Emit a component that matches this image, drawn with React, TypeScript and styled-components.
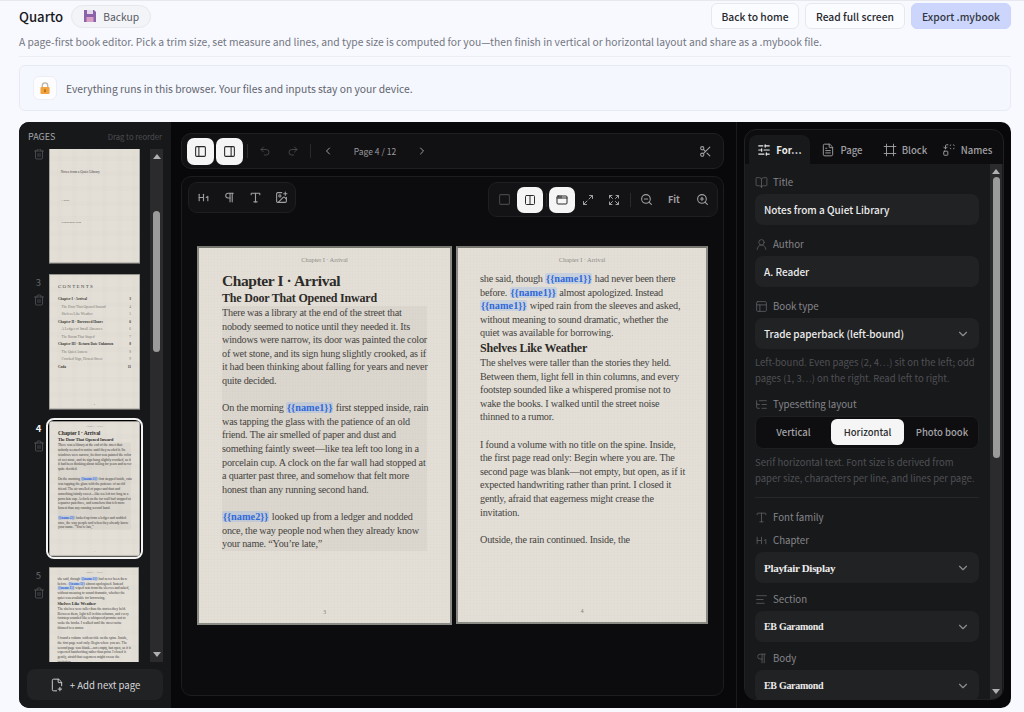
import { ReactNode } from 'react';
import styled, { createGlobalStyle } from 'styled-components';
import {
  AlignLeft,
  AppWindow,
  BookOpen,
  ChevronDown,
  ChevronLeft,
  ChevronRight,
  Columns2,
  Expand,
  FilePlus2,
  FileText,
  Frame,
  Heading1,
  ImagePlus,
  ListTree,
  Maximize2,
  PanelLeft,
  PanelRight,
  PanelsTopLeft,
  Pilcrow,
  Redo2,
  Replace,
  Scissors,
  SlidersHorizontal,
  Square,
  Trash2,
  Type,
  Undo2,
  UserRound,
  ZoomIn,
  ZoomOut,
} from 'lucide-react';

const GlobalStyle = createGlobalStyle`
  html, body {
    margin: 0;
    height: 712px;
    overflow: hidden;
    background: #f8f9ff;
    font-family: "Noto Sans CJK JP", "Noto Sans", sans-serif;
  }
  * { box-sizing: border-box; }
`;

const Shell = styled.div`
  width: 1024px;
  height: 712px;
  padding: 2px 13px 0 19px;
  border-top: 1px solid #e6e8ee;
  overflow: hidden;
`;

const HeaderRow = styled.header`
  display: flex;
  align-items: center;
  height: 26px;
`;

const BrandTitle = styled.h1`
  margin: 0 8px 0 0;
  font-size: 13.2px;
  font-weight: 500;
  color: #17181c;
`;

const BackupPill = styled.div`
  display: flex;
  align-items: center;
  gap: 7px;
  height: 23px;
  padding: 0 11px 0 12px;
  border: 1px solid #e6e8ee;
  border-radius: 12px;
  background: #f3f4f8;
  font-size: 10.3px;
  color: #55585f;
`;

const HeaderActions = styled.div`
  display: flex;
  gap: 6px;
  margin-left: auto;
`;

const HeaderButton = styled.button<{ $primary?: boolean; $w: number }>`
  width: ${(p) => p.$w}px;
  height: 26px;
  padding: 0;
  border: 1px solid ${(p) => (p.$primary ? '#c9d3fb' : '#e6e8ee')};
  border-radius: 6px;
  background: ${(p) => (p.$primary ? '#ccd6fc' : '#fbfcff')};
  font-family: inherit;
  font-size: 10.3px;
  font-weight: 500;
  color: ${(p) => (p.$primary ? '#33363f' : '#26282d')};
`;

const Tagline = styled.p`
  margin: 5px 0 0;
  height: 23px;
  padding-bottom: 7px;
  border-bottom: 1px solid #eceef3;
  font-size: 10.3px;
  line-height: 16px;
  color: #74777f;
`;

const Notice = styled.div`
  display: flex;
  align-items: center;
  gap: 9px;
  height: 46px;
  margin-top: 8px;
  padding-left: 13px;
  border: 1px solid #e8ebf5;
  border-radius: 6px;
  background: #f5f7ff;
  font-size: 10.3px;
  color: #62656d;
`;

const LockBox = styled.div`
  display: flex;
  align-items: center;
  justify-content: center;
  width: 24px;
  height: 24px;
  border: 1px solid #eceef5;
  border-radius: 6px;
  background: #fdfdff;
`;

const Editor = styled.section`
  display: grid;
  grid-template-columns: 152px 566px 274px;
  height: 586px;
  margin-top: 11px;
  border-radius: 10px;
  background: #08080a;
  overflow: hidden;
`;

const PagesPanel = styled.aside`
  display: flex;
  flex-direction: column;
  height: 586px;
  padding: 8px 8px 8px 9px;
  background: #17181a;
`;

const PagesHead = styled.div`
  display: flex;
  align-items: center;
  justify-content: space-between;
  height: 13px;
  padding-right: 1px;
  font-size: 9px;
  color: #a3a4a8;
`;

const DragHint = styled.span`
  font-size: 7.7px;
  color: #4d4e52;
`;

const PagesBody = styled.div`
  display: flex;
  gap: 6px;
  height: 513px;
  margin-top: 6px;
`;

const ThumbList = styled.div`
  flex: 1;
  min-width: 0;
  overflow: hidden;
`;

const ThumbRows = styled.div`
  display: flex;
  flex-direction: column;
  gap: 10px;
  margin-top: -21px;
`;

const ThumbRow = styled.div`
  display: flex;
`;

const ThumbSide = styled.div<{ $active?: boolean }>`
  display: flex;
  flex-direction: column;
  align-items: center;
  gap: 5px;
  flex: none;
  width: 21px;
  padding-top: 2px;
  font-size: 9.5px;
  line-height: 13px;
  font-weight: ${(p) => (p.$active ? 700 : 400)};
  color: ${(p) => (p.$active ? '#f2f2f2' : '#66676b')};
  svg { color: #56575b; }
`;

const ThumbFrame = styled.div<{ $active?: boolean }>`
  flex: none;
  overflow: hidden;
  ${(p) =>
    p.$active
      ? `width: 97px;
         height: 141px;
         margin: -2px 0 -2px -3px;
         padding: 1px;
         border: 2px solid #f4f4f4;
         border-radius: 8px;
         background: #000;`
      : `width: 91px;
         height: 136px;`}
`;

const ThumbScale = styled.div`
  width: 255px;
  height: 381px;
  transform: scale(0.357);
  transform-origin: top left;
`;

const Scrollbar = styled.div<{ $width: number }>`
  display: flex;
  flex-direction: column;
  flex: none;
  width: ${(p) => p.$width}px;
  background: #2b2b2d;
`;

const ScrollArrow = styled.div<{ $down?: boolean }>`
  flex: none;
  width: 0;
  height: 0;
  margin: 5px auto 0;
  border-left: 4px solid transparent;
  border-right: 4px solid transparent;
  ${(p) => (p.$down ? 'border-top: 5px solid #b0b0b0; margin: auto auto 5px;' : 'border-bottom: 5px solid #b0b0b0;')}
`;

const ScrollThumb = styled.div<{ $top: number; $height: number }>`
  flex: none;
  width: 7px;
  height: ${(p) => p.$height}px;
  margin: ${(p) => p.$top}px auto 0;
  border-radius: 4px;
  background: #9b9b9b;
`;

const AddPage = styled.button`
  display: flex;
  align-items: center;
  justify-content: center;
  gap: 6px;
  height: 31px;
  margin: 7px 0 0 -1px;
  width: 136px;
  border: 0;
  border-radius: 8px;
  background: #212224;
  font-family: inherit;
  font-size: 9.6px;
  color: #d6d6d8;
`;

const Center = styled.main`
  display: flex;
  flex-direction: column;
  gap: 7px;
  padding: 11px 12px 12px 10px;
  border-right: 1px solid #1b1b1e;
`;

const TopBar = styled.div`
  display: flex;
  align-items: center;
  gap: 2px;
  height: 36px;
  padding: 0 5px;
  border: 1px solid #202023;
  border-radius: 10px;
  background: #111113;
`;

const ToolButton = styled.div<{ $on?: boolean; $dim?: boolean; $w?: number }>`
  display: flex;
  align-items: center;
  justify-content: center;
  flex: none;
  width: ${(p) => p.$w ?? 26}px;
  height: ${(p) => (p.$w === 27 ? '27px' : '26px')};
  border-radius: 7px;
  font-size: 9px;
  font-weight: 600;
  background: ${(p) => (p.$on ? '#f5f5f5' : 'transparent')};
  color: ${(p) => (p.$on ? '#2a2a2c' : p.$dim ? '#46464a' : '#a0a0a4')};
`;

const ToolSep = styled.div`
  flex: none;
  width: 1px;
  height: 14px;
  margin: 0 2px;
  background: #2a2a2d;
`;

const PageLabel = styled.span`
  flex: none;
  width: 64px;
  text-align: center;
  font-size: 8.5px;
  color: #9a9a9e;
`;

const Push = styled.div`
  margin-left: auto;
`;

const Canvas = styled.div`
  flex: 1;
  padding: 5px 5px 0 6px;
  border: 1px solid #1d1d20;
  border-radius: 10px;
  background: #0c0c0e;
`;

const CanvasTools = styled.div`
  display: flex;
  align-items: flex-start;
  justify-content: space-between;
`;

const ToolGroup = styled.div<{ $tall?: boolean }>`
  display: flex;
  align-items: center;
  height: ${(p) => (p.$tall ? '35px' : '31px')};
  padding: 0 ${(p) => (p.$tall ? '2px' : '1px')};
  border: 1px solid #1f1f22;
  border-radius: 9px;
  background: #131315;
  ${ToolSep} { margin: 0 2.5px; }
`;

const Spread = styled.div`
  display: flex;
  align-items: flex-start;
  gap: 4px;
  margin: 29px 0 0 9px;
`;

const Sheet = styled.article<{ $narrow?: boolean }>`
  display: flex;
  flex-direction: column;
  width: ${(p) => (p.$narrow ? '252px' : '255px')};
  height: ${(p) => (p.$narrow ? '378px' : '379px')};
  padding: 0 ${(p) => (p.$narrow ? '22px' : '23px')};
  border: 2px solid #8b8b86;
  border-top-color: #77776f;
  background-color: #e3dfd7;
  background-image:
    repeating-linear-gradient(0deg, rgba(0, 0, 0, 0.008) 0 1px, transparent 1px 3px),
    repeating-linear-gradient(90deg, rgba(0, 0, 0, 0.008) 0 1px, transparent 1px 3px);
  font-family: "Liberation Serif", serif;
  color: #45433e;
`;

const RunningHead = styled.div`
  flex: none;
  height: 24px;
  padding-top: 8px;
  text-align: center;
  font-size: 6.5px;
  line-height: 8px;
  letter-spacing: -0.1px;
  color: #8f8d87;
`;

const SheetBody = styled.div`
  flex: 1;
`;

const ChapterHead = styled.h2`
  margin: 0;
  font-size: 15.5px;
  line-height: 18px;
  letter-spacing: -0.4px;
  font-weight: 700;
  color: #2d2b28;
  white-space: nowrap;
`;

const SectionHead = styled.h3`
  margin: 0;
  font-size: 12px;
  line-height: 16px;
  letter-spacing: -0.2px;
  font-weight: 700;
  color: #2d2b28;
  white-space: nowrap;
`;

const Shade = styled.div`
  background: rgba(90, 80, 60, 0.055);
`;

const Line = styled.div`
  height: 13.6px;
  font-size: 10.2px;
  line-height: 13.6px;
  letter-spacing: -0.2px;
  white-space: nowrap;
`;

const Token = styled.span`
  padding: 0 1px;
  border-radius: 2px;
  background: rgba(80, 150, 255, 0.18);
  font-size: 10.3px;
  letter-spacing: 0;
  font-weight: 700;
  color: #2f68d8;
`;

const Folio = styled.div`
  flex: none;
  height: 14px;
  text-align: center;
  font-size: 5.5px;
  line-height: 6px;
  color: #77756f;
`;

const TitleLine = styled.div<{ $gap: number; $size: number }>`
  margin-top: ${(p) => p.$gap}px;
  padding-left: 8px;
  font-size: ${(p) => p.$size}px;
  line-height: 14px;
  white-space: nowrap;
`;

const ContentsHead = styled.div`
  margin-bottom: 16px;
  font-size: 14px;
  line-height: 18px;
  letter-spacing: 3.5px;
`;

const ContentsRow = styled.div<{ $major?: boolean }>`
  display: flex;
  justify-content: space-between;
  padding-left: ${(p) => (p.$major ? 0 : '10px')};
  font-size: 10px;
  line-height: 21px;
  font-weight: ${(p) => (p.$major ? 700 : 400)};
  color: ${(p) => (p.$major ? '#3c3a36' : '#7a7770')};
`;

const Inspector = styled.aside`
  padding: 7px 7px 8px 7px;
`;

const InspectorFrame = styled.div`
  display: flex;
  flex-direction: column;
  height: 571px;
  border: 1px solid #212124;
  border-radius: 12px;
  overflow: hidden;
  background: #0d0d0f;
`;

const Tabs = styled.div`
  display: flex;
  align-items: flex-end;
  flex: none;
  height: 34px;
  padding-left: 4px;
`;

const Tab = styled.div<{ $on?: boolean; $w: number }>`
  display: flex;
  align-items: center;
  justify-content: center;
  gap: 5px;
  flex: none;
  width: ${(p) => p.$w}px;
  height: 29px;
  border-radius: 8px 8px 0 0;
  background: ${(p) => (p.$on ? '#18191b' : 'transparent')};
  font-size: 9.6px;
  font-weight: ${(p) => (p.$on ? 700 : 500)};
  color: ${(p) => (p.$on ? '#ececec' : '#a0a0a4')};
`;

const InspectorBody = styled.div`
  flex: 1;
  display: flex;
  min-height: 0;
  background: #18191b;
`;

const Form = styled.div`
  flex: none;
  width: 224px;
  margin: 0 11px 0 10px;
  overflow: hidden;
`;

const FieldLabel = styled.label<{ $top: number }>`
  display: flex;
  align-items: center;
  gap: 5px;
  height: 16px;
  margin-top: ${(p) => p.$top}px;
  font-size: 9.7px;
  color: #85858a;
  svg { flex: none; color: #5f5f64; }
`;

const Field = styled.div<{ $serif?: number }>`
  display: flex;
  align-items: center;
  justify-content: space-between;
  height: 31px;
  margin-top: 4px;
  padding: 0 9px;
  border-radius: 8px;
  background: #212224;
  font-family: ${(p) => (p.$serif ? '"Liberation Serif", serif' : 'inherit')};
  font-size: ${(p) => p.$serif ?? 10}px;
  letter-spacing: ${(p) => (p.$serif ? '-0.3px' : 'normal')};
  font-weight: ${(p) => (p.$serif ? 700 : 500)};
  color: #ececec;
  svg { color: #8d8d92; }
`;

const Hint = styled.p`
  margin: 5px 0 0;
  font-size: 9.5px;
  line-height: 16px;
  color: #4f5054;
  white-space: nowrap;
`;

const Segments = styled.div`
  display: grid;
  grid-template-columns: 75px 73px 76px;
  height: 33px;
  margin-top: 4px;
  border: 1px solid #1f1f22;
  border-radius: 8px;
  background: #0e0e10;
`;

const Segment = styled.div<{ $on?: boolean }>`
  display: flex;
  align-items: center;
  justify-content: center;
  height: 26px;
  margin-top: 2px;
  border-radius: 6px;
  background: ${(p) => (p.$on ? '#f5f5f5' : 'transparent')};
  font-size: 9.5px;
  font-weight: 500;
  color: ${(p) => (p.$on ? '#2b2b2d' : '#a3a3a7')};
`;

const Rule = styled.hr`
  height: 1px;
  margin: 11px 0 0;
  border: 0;
  background: #27272a;
`;

const Floppy = () => (
  <svg width="12" height="12" viewBox="0 0 12 12">
    <path d="M0 0h10l2 2v10H0z" fill="#8a63a8" />
    <path d="M3 0h6v4H3z" fill="#e4dcea" />
    <path d="M2.5 7h7v5h-7z" fill="#d9a0c6" />
  </svg>
);

const Lock = () => (
  <svg width="10" height="12" viewBox="0 0 11 13">
    <path d="M2.5 6V3.8a3 3 0 0 1 6 0V6" fill="none" stroke="#b9b2a4" strokeWidth="1.4" />
    <rect x="0.5" y="5.5" width="10" height="7.5" rx="1" fill="#f2a23c" />
    <rect x="4.6" y="8" width="1.8" height="3" fill="#a86a18" />
  </svg>
);

const LEFT_PARAS: ReactNode[][] = [
  [
    'There was a library at the end of the street that',
    'nobody seemed to notice until they needed it. Its',
    'windows were narrow, its door was painted the color',
    'of wet stone, and its sign hung slightly crooked, as if',
    'it had been thinking about falling for years and never',
    'quite decided.',
  ],
  [
    <>On the morning <Token>{'{{name1}}'}</Token> first stepped inside, rain</>,
    'was tapping the glass with the patience of an old',
    'friend. The air smelled of paper and dust and',
    'something faintly sweet—like tea left too long in a',
    'porcelain cup. A clock on the far wall had stopped at',
    'a quarter past three, and somehow that felt more',
    'honest than any running second hand.',
  ],
  [
    <><Token>{'{{name2}}'}</Token> looked up from a ledger and nodded</>,
    'once, the way people nod when they already know',
    'your name. “You’re late,”',
  ],
];

const RIGHT_TOP: ReactNode[] = [
  <>she said, though <Token>{'{{name1}}'}</Token> had never been there</>,
  <>before. <Token>{'{{name1}}'}</Token> almost apologized. Instead</>,
  <><Token>{'{{name1}}'}</Token> wiped rain from the sleeves and asked,</>,
  'without meaning to sound dramatic, whether the',
  'quiet was available for borrowing.',
];

const RIGHT_BOTTOM: ReactNode[] = [
  'The shelves were taller than the stories they held.',
  'Between them, light fell in thin columns, and every',
  'footstep sounded like a whispered promise not to',
  'wake the books. I walked until the street noise',
  'thinned to a rumor.',
  <>&nbsp;</>,
  'I found a volume with no title on the spine. Inside,',
  'the first page read only: Begin where you are. The',
  'second page was blank—not empty, but open, as if it',
  'expected handwriting rather than print. I closed it',
  'gently, afraid that eagerness might crease the',
  'invitation.',
  <>&nbsp;</>,
  'Outside, the rain continued. Inside, the',
];

const CONTENTS: [string, string, boolean][] = [
  ['Chapter I · Arrival', '3', true],
  ['The Door That Opened Inward', '4', false],
  ['Shelves Like Weather', '5', false],
  ['Chapter II · Borrowed Hours', '6', true],
  ['A Ledger of Small Absences', '6', false],
  ['The Room That Stayed', '7', false],
  ['Chapter III · Return Date Unknown', '8', true],
  ['The Quiet Annexe', '8', false],
  ['Crooked Sign, Honest Street', '9', false],
  ['Coda', '11', true],
];

const renderLines = (lines: ReactNode[]) => lines.map((l, i) => <Line key={i}>{l}</Line>);

const LeftPage = () => (
  <Sheet>
    <RunningHead>Chapter I · Arrival</RunningHead>
    <SheetBody>
      <ChapterHead>Chapter I · Arrival</ChapterHead>
      <SectionHead>The Door That Opened Inward</SectionHead>
      <Shade>
        {LEFT_PARAS.map((para, i) => (
          <div key={i}>
            {renderLines(para)}
            {i < LEFT_PARAS.length - 1 && <Line>&nbsp;</Line>}
          </div>
        ))}
      </Shade>
    </SheetBody>
    <Folio>3</Folio>
  </Sheet>
);

const RightPage = () => (
  <Sheet $narrow>
    <RunningHead>Chapter I · Arrival</RunningHead>
    <SheetBody>
      {renderLines(RIGHT_TOP)}
      <SectionHead>Shelves Like Weather</SectionHead>
      {renderLines(RIGHT_BOTTOM)}
    </SheetBody>
    <Folio>4</Folio>
  </Sheet>
);

const TitlePage = () => (
  <Sheet>
    <RunningHead />
    <SheetBody>
      <TitleLine $gap={91} $size={10}>Notes from a Quiet Library</TitleLine>
      <TitleLine $gap={65} $size={6}>A. Reader</TitleLine>
      <TitleLine $gap={48} $size={6}>An independent edition</TitleLine>
    </SheetBody>
  </Sheet>
);

const ContentsPage = () => (
  <Sheet>
    <RunningHead />
    <SheetBody>
      <ContentsHead>CONTENTS</ContentsHead>
      {CONTENTS.map(([name, page, major]) => (
        <ContentsRow key={name} $major={major}>
          <span>{name}</span>
          <span>{page}</span>
        </ContentsRow>
      ))}
    </SheetBody>
    <Folio>2</Folio>
  </Sheet>
);

const THUMBS: { n: number; active?: boolean; page: ReactNode }[] = [
  { n: 2, page: <TitlePage /> },
  { n: 3, page: <ContentsPage /> },
  { n: 4, active: true, page: <LeftPage /> },
  { n: 5, page: <RightPage /> },
];

export default function App() {
  return (
    <>
      <GlobalStyle />
      <Shell>
        <HeaderRow>
          <BrandTitle>Quarto</BrandTitle>
          <BackupPill>
            <Floppy />
            Backup
          </BackupPill>
          <HeaderActions>
            <HeaderButton $w={88}>Back to home</HeaderButton>
            <HeaderButton $w={100}>Read full screen</HeaderButton>
            <HeaderButton $primary $w={100}>Export .mybook</HeaderButton>
          </HeaderActions>
        </HeaderRow>
        <Tagline>
          A page-first book editor. Pick a trim size, set measure and lines, and type size is computed for you—then
          finish in vertical or horizontal layout and share as a .mybook file.
        </Tagline>
        <Notice>
          <LockBox>
            <Lock />
          </LockBox>
          Everything runs in this browser. Your files and inputs stay on your device.
        </Notice>

        <Editor>
          <PagesPanel>
            <PagesHead>
              <span>PAGES</span>
              <DragHint>Drag to reorder</DragHint>
            </PagesHead>
            <PagesBody>
              <ThumbList>
                <ThumbRows>
                  {THUMBS.map((t) => (
                    <ThumbRow key={t.n}>
                      <ThumbSide $active={t.active}>
                        {t.n}
                        <Trash2 size={12} strokeWidth={1.5} />
                      </ThumbSide>
                      <ThumbFrame $active={t.active}>
                        <ThumbScale>{t.page}</ThumbScale>
                      </ThumbFrame>
                    </ThumbRow>
                  ))}
                </ThumbRows>
              </ThumbList>
              <Scrollbar $width={13}>
                <ScrollArrow />
                <ScrollThumb $top={52} $height={141} />
                <ScrollArrow $down />
              </Scrollbar>
            </PagesBody>
            <AddPage>
              <FilePlus2 size={14} strokeWidth={1.6} />+ Add next page
            </AddPage>
          </PagesPanel>

          <Center>
            <TopBar>
              <ToolButton $on $w={27}><PanelLeft size={13} /></ToolButton>
              <ToolButton $on $w={27}><PanelRight size={13} /></ToolButton>
              <ToolSep />
              <ToolButton $dim><Undo2 size={12} /></ToolButton>
              <ToolButton $dim><Redo2 size={12} /></ToolButton>
              <ToolSep />
              <ToolButton><ChevronLeft size={12} /></ToolButton>
              <PageLabel>Page 4 / 12</PageLabel>
              <ToolButton><ChevronRight size={12} /></ToolButton>
              <Push />
              <ToolButton><Scissors size={13} /></ToolButton>
            </TopBar>
            <Canvas>
              <CanvasTools>
                <ToolGroup>
                  <ToolButton><Heading1 size={13} /></ToolButton>
                  <ToolButton><Pilcrow size={13} /></ToolButton>
                  <ToolButton><Type size={13} /></ToolButton>
                  <ToolButton><ImagePlus size={13} /></ToolButton>
                </ToolGroup>
                <ToolGroup $tall>
                  <ToolButton $dim><Square size={13} /></ToolButton>
                  <ToolButton $on><Columns2 size={12} /></ToolButton>
                  <ToolSep />
                  <ToolButton $on><AppWindow size={12} /></ToolButton>
                  <ToolButton><Maximize2 size={12} /></ToolButton>
                  <ToolButton><Expand size={12} /></ToolButton>
                  <ToolSep />
                  <ToolButton><ZoomOut size={13} /></ToolButton>
                  <ToolButton $w={30}>Fit</ToolButton>
                  <ToolButton><ZoomIn size={13} /></ToolButton>
                </ToolGroup>
              </CanvasTools>
              <Spread>
                <LeftPage />
                <RightPage />
              </Spread>
            </Canvas>
          </Center>

          <Inspector>
            <InspectorFrame>
              <Tabs>
                <Tab $on $w={61}><SlidersHorizontal size={14} />For…</Tab>
                <Tab $w={64}><FileText size={14} strokeWidth={1.6} />Page</Tab>
                <Tab $w={62}><Frame size={14} strokeWidth={1.6} />Block</Tab>
                <Tab $w={62}><Replace size={14} strokeWidth={1.6} />Names</Tab>
              </Tabs>
              <InspectorBody>
                <Form>
                  <FieldLabel $top={10}><BookOpen size={13} strokeWidth={1.5} />Title</FieldLabel>
                  <Field>Notes from a Quiet Library</Field>
                  <FieldLabel $top={11}><UserRound size={13} strokeWidth={1.5} />Author</FieldLabel>
                  <Field>A. Reader</Field>
                  <FieldLabel $top={11}><PanelsTopLeft size={13} strokeWidth={1.5} />Book type</FieldLabel>
                  <Field>Trade paperback (left-bound)<ChevronDown size={14} /></Field>
                  <Hint>
                    Left-bound. Even pages (2, 4…) sit on the left; odd
                    <br />
                    pages (1, 3…) on the right. Read left to right.
                  </Hint>
                  <FieldLabel $top={10}><ListTree size={13} strokeWidth={1.5} />Typesetting layout</FieldLabel>
                  <Segments>
                    <Segment>Vertical</Segment>
                    <Segment $on>Horizontal</Segment>
                    <Segment>Photo book</Segment>
                  </Segments>
                  <Hint>
                    Serif horizontal text. Font size is derived from
                    <br />
                    paper size, characters per line, and lines per page.
                  </Hint>
                  <Rule />
                  <FieldLabel $top={11}><Type size={13} strokeWidth={1.5} />Font family</FieldLabel>
                  <FieldLabel $top={7}><Heading1 size={13} strokeWidth={1.5} />Chapter</FieldLabel>
                  <Field $serif={11}>Playfair Display<ChevronDown size={14} /></Field>
                  <FieldLabel $top={8}><AlignLeft size={13} strokeWidth={1.5} />Section</FieldLabel>
                  <Field $serif={10}>EB Garamond<ChevronDown size={14} /></Field>
                  <FieldLabel $top={8}><Pilcrow size={13} strokeWidth={1.5} />Body</FieldLabel>
                  <Field $serif={10}>EB Garamond<ChevronDown size={14} /></Field>
                </Form>
                <Scrollbar $width={12}>
                  <ScrollArrow />
                  <ScrollThumb $top={3} $height={281} />
                  <ScrollArrow $down />
                </Scrollbar>
              </InspectorBody>
            </InspectorFrame>
          </Inspector>
        </Editor>
      </Shell>
    </>
  );
}
